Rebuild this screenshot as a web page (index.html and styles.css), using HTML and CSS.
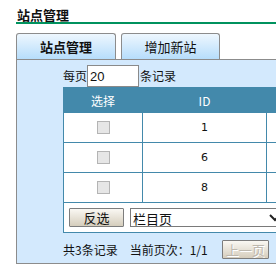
FILE: index.html
```html
<!DOCTYPE html>
<html lang="zh-CN">
<head>
  <meta charset="UTF-8">
  <title>站点管理</title>
  <link rel="stylesheet" href="styles.css">
</head>
<body>
  <div class="page">
    <h2 class="title">站点管理</h2>

    <div class="tabs">
      <div class="tab active">站点管理</div>
      <div class="tab">增加新站</div>
    </div>

    <div class="panel">
      <div class="perpage">每页<input class="num" type="text" value="20">条记录</div>

      <table class="list">
        <thead>
          <tr>
            <th class="col-check">选择</th>
            <th class="col-id">ID</th>
            <th class="col-name"></th>
          </tr>
        </thead>
        <tbody>
          <tr>
            <td><span class="check"></span></td>
            <td>1</td>
            <td></td>
          </tr>
          <tr>
            <td><span class="check"></span></td>
            <td>6</td>
            <td></td>
          </tr>
          <tr>
            <td><span class="check"></span></td>
            <td>8</td>
            <td></td>
          </tr>
          <tr class="actions">
            <td colspan="3">
              <div class="action-row">
                <button class="btn">反选</button>
                <div class="select-wrap">
                  <select class="select">
                    <option>栏目页</option>
                  </select>
                  <svg class="arrow" width="12" height="8" viewBox="0 0 12 8"><path d="M1 1 L6 6 L11 1" fill="none" stroke="#222" stroke-width="2"/></svg>
                </div>
              </div>
            </td>
          </tr>
        </tbody>
      </table>

      <div class="pager">
        <span>共3条记录</span>
        <span class="current">当前页次：1/1</span>
        <button class="btn" disabled>上一页</button>
      </div>
    </div>
  </div>
</body>
</html>
```

FILE: styles.css
```css
html {
  overflow: hidden;
}
body {
  margin: 0;
  font-family: "Noto Sans CJK SC", "Liberation Sans", sans-serif;
  font-size: 12px;
  color: #111;
  background: #fff;
}
.page {
  width: 420px;
}
.title {
  margin: 0 0 0 16px;
  padding: 7px 0 0 1px;
  font-size: 13px;
  line-height: 15px;
  font-weight: bold;
  border-bottom: 2px solid #00925e;
}
.tabs {
  display: flex;
  gap: 5px;
  margin: 9px 0 0 16px;
}
.tab {
  box-sizing: border-box;
  width: 99px;
  height: 26px;
  line-height: 25px;
  text-align: center;
  font-size: 13px;
  border: 1px solid #8c8c8c;
  border-bottom: none;
  border-radius: 3px 3px 0 0;
  background: linear-gradient(#eef7fe, #b6ddfb);
}
.tab.active {
  width: 100px;
  font-weight: bold;
}
.panel {
  margin-left: 16px;
  padding: 5px 0 4px 46px;
  background: #d3e9fd;
  border: 1px solid #8c8c8c;
  border-right: none;
}
.perpage {
  display: flex;
  align-items: center;
  line-height: 22px;
}
.num {
  box-sizing: border-box;
  width: 52px;
  height: 22px;
  margin: 0 1px 0 0;
  padding: 0 2px;
  border: 1px solid #8a8a8a;
  font-family: "Liberation Sans", sans-serif;
  font-size: 13px;
  color: #111;
}
.list {
  border-collapse: collapse;
  table-layout: fixed;
  width: 320px;
  background: #fff;
}
.list th,
.list td {
  border: 1px solid #4389ab;
  padding: 0;
  text-align: center;
}
.list th {
  height: 24px;
  background: #4389ab;
  color: #fff;
  font-weight: normal;
  font-size: 12px;
}
.list td {
  height: 29px;
  font-family: "DejaVu Sans", sans-serif;
  font-size: 11px;
}
.col-check {
  width: 78px;
}
.col-id {
  width: 123px;
}
.check {
  display: inline-block;
  box-sizing: border-box;
  width: 13px;
  height: 13px;
  vertical-align: middle;
  background: #e6e6e6;
  border: 1px solid #b4b4b4;
}
.actions td {
  text-align: left;
}
.action-row {
  display: flex;
  align-items: center;
  gap: 6px;
  padding-left: 5px;
}
.btn {
  box-sizing: border-box;
  height: 19px;
  width: 55px;
  padding: 0;
  font-family: "Noto Sans CJK SC", sans-serif;
  font-size: 13px;
  line-height: 17px;
  color: #111;
  border: 1px solid #7d7d7d;
  border-radius: 1px;
  background: linear-gradient(#faf8f3, #d5cdbc);
}
.btn:disabled {
  width: 47px;
  color: #bdb8ae;
  text-shadow: 1px 1px 0 #fff;
}
.select-wrap {
  position: relative;
}
.select {
  box-sizing: border-box;
  width: 155px;
  height: 19px;
  padding: 0 0 0 2px;
  font-family: "Noto Sans CJK SC", sans-serif;
  font-size: 13px;
  color: #111;
  background: #fff;
  border: 1px solid #7a7a7a;
  border-radius: 0;
  appearance: none;
  outline: none;
}
.arrow {
  position: absolute;
  right: 4px;
  top: 6px;
  pointer-events: none;
}
.pager {
  display: flex;
  align-items: center;
  margin-top: 7px;
  line-height: 19px;
}
.current {
  margin-left: 12px;
}
.pager .btn {
  margin-left: 14px;
}
```
